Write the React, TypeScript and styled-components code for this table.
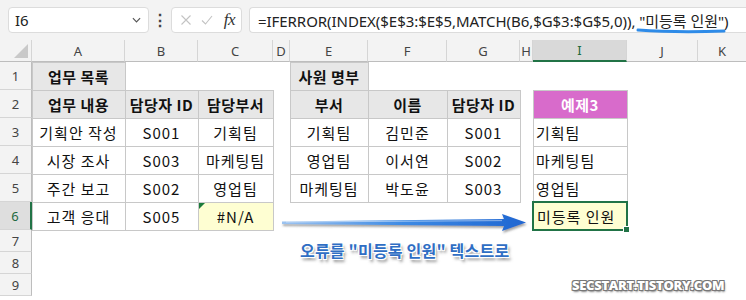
import styled, { createGlobalStyle } from "styled-components"

type Kind = "title" | "head" | "data" | "ex" | "list" | "na" | "sel"
type Spec = { t?: string; k?: Kind } | null

const COLS = ["A", "B", "C", "D", "E", "F", "G", "H", "I", "J", "K"]
const WIDTHS = [32, 93, 73, 75, 17, 78, 79, 73, 13, 94, 71]

const d = (t: string): Spec => ({ t, k: "data" })
const h = (t: string): Spec => ({ t, k: "head" })
const l = (t: string): Spec => ({ t, k: "list" })
const _ = null

const ROWS: Spec[][] = [
  [{ t: "업무 목록", k: "title" }, _, _, _, { t: "사원 명부", k: "title" }, _, _, _, _, _, _],
  [h("업무 내용"), h("담당자 ID"), h("담당부서"), _, h("부서"), h("이름"), h("담당자 ID"), _, { t: "예제3", k: "ex" }, _, _],
  [d("기획안 작성"), d("S001"), d("기획팀"), _, d("기획팀"), d("김민준"), d("S001"), _, l("기획팀"), _, _],
  [d("시장 조사"), d("S003"), d("마케팅팀"), _, d("영업팀"), d("이서연"), d("S002"), _, l("마케팅팀"), _, _],
  [d("주간 보고"), d("S002"), d("영업팀"), _, d("마케팅팀"), d("박도윤"), d("S003"), _, l("영업팀"), _, _],
  [d("고객 응대"), d("S005"), { t: "#N/A", k: "na" }, _, _, _, _, _, { t: "미등록 인원", k: "sel" }, _, _],
  [], [], [],
]

const GlobalStyle = createGlobalStyle`
  body {
    margin: 0;
    background: #ffffff;
    overflow: hidden;
    font-family: "Noto Sans", "Noto Sans CJK KR", sans-serif;
  }
`

const App = () => {
  return (
    <>
      <GlobalStyle />
      <Frame>
        <Toolbar>
          <NameBox>
            <span>I6</span>
            <Chevron viewBox="0 0 10 6">
              <path d="M1 1l4 4 4-4" />
            </Chevron>
          </NameBox>
          <Dots>⋮</Dots>
          <FxBox>
            <FxIcon viewBox="0 0 12 12">
              <path d="M1.5 1.5l9 9M10.5 1.5l-9 9" />
            </FxIcon>
            <FxIcon viewBox="0 0 12 12">
              <path d="M1 6.5l3.5 3.5L11 2" />
            </FxIcon>
            <Fx>fx</Fx>
          </FxBox>
          <FormulaInput>
            =IFERROR(INDEX($E$3:$E$5,MATCH(B6,$G$3:$G$5,0)), "미등록 인원")
          </FormulaInput>
        </Toolbar>

        <Sheet>
          <Corner>
            <svg width="14" height="14" viewBox="0 0 14 14">
              <path d="M14 0V14H0Z" fill="#c9c9c9" />
            </svg>
          </Corner>
          {COLS.map((c, i) => (
            <ColHead key={c} $sel={c === "I"} $last={i === COLS.length - 1}>
              {c}
            </ColHead>
          ))}

          {ROWS.map((row, r) => (
            <Row key={r} row={row} n={r + 1} />
          ))}
        </Sheet>

        <Underline width="90" height="8" viewBox="0 0 90 8">
          <path d="M2 3 C 30 5, 60 5, 88 4" />
        </Underline>

        <Arrow width="252" height="26" viewBox="0 0 252 26">
          <defs>
            <linearGradient id="shaft" x1="0" y1="0" x2="1" y2="0">
              <stop offset="0" stopColor="#9cc3f0" />
              <stop offset="0.5" stopColor="#3d8ae4" />
              <stop offset="1" stopColor="#1f66d1" />
            </linearGradient>
            <filter id="drop" x="-5%" y="-50%" width="110%" height="200%">
              <feDropShadow dx="1" dy="2" stdDeviation="1.2" floodColor="#555" floodOpacity="0.55" />
            </filter>
          </defs>
          <path
            d="M2 9.5 L224 7 L222 2 L246 10.5 L222 19 L224 14 L2 12 Z"
            fill="url(#shaft)"
            filter="url(#drop)"
          />
          <path d="M6 10 L222 8.6" stroke="#ffffff" strokeOpacity="0.6" strokeWidth="0.8" />
        </Arrow>

        <Caption>오류를 "미등록 인원" 텍스트로</Caption>
        <Watermark>SECSTART.TISTORY.COM</Watermark>
      </Frame>
    </>
  )
}

const Row = ({ row, n }: { row: Spec[]; n: number }) => {
  return (
    <>
      <RowHead $sel={n === 6}>{n}</RowHead>
      {COLS.map((c, i) => {
        const s = row[i]
        return (
          <Cell key={c} $kind={s?.k}>
            {s?.k === "na" && <ErrorMark />}
            {s?.t}
            {s?.k === "sel" && <Handle />}
          </Cell>
        )
      })}
    </>
  )
}

export default App

const Frame = styled.div`
  position: relative;
  width: 746px;
  height: 300px;
  overflow: hidden;
  background: #ffffff;
`

const Toolbar = styled.div`
  height: 40px;
  box-sizing: border-box;
  padding: 7px 0 7px 8px;
  background: #f3f3f3;
  display: flex;
  align-items: stretch;
`

const NameBox = styled.div`
  width: 141px;
  box-sizing: border-box;
  background: #ffffff;
  border: 1px solid #dcdcdc;
  border-radius: 4px;
  display: flex;
  align-items: center;
  justify-content: space-between;
  padding: 0 7px 0 6px;
  font-size: 15px;
  color: #222;
`

const Chevron = styled.svg`
  width: 9px;
  height: 6px;
  fill: none;
  stroke: #555;
  stroke-width: 1.3;
`

const Dots = styled.div`
  width: 22px;
  display: flex;
  align-items: center;
  justify-content: center;
  font-size: 16px;
  font-weight: 700;
  color: #444;
`

const FxBox = styled.div`
  width: 71px;
  box-sizing: border-box;
  background: #ffffff;
  border: 1px solid #dcdcdc;
  border-radius: 4px;
  display: flex;
  align-items: center;
  gap: 9px;
  padding: 0 6px 0 8px;
  margin-right: 7px;
`

const FxIcon = styled.svg`
  width: 12px;
  height: 12px;
  fill: none;
  stroke: #c3c3c3;
  stroke-width: 1.1;
`

const Fx = styled.span`
  font-family: "Liberation Serif", serif;
  font-style: italic;
  font-size: 17px;
  color: #333;
  margin-left: auto;
  letter-spacing: -0.5px;
`

const FormulaInput = styled.div`
  flex: 1;
  background: #ffffff;
  border: 1px solid #dcdcdc;
  border-right: none;
  border-radius: 4px 0 0 4px;
  display: flex;
  align-items: center;
  padding-left: 8px;
  font-size: 15px;
  color: #222;
  white-space: nowrap;
  overflow: hidden;
  letter-spacing: -0.05px;
`

const Sheet = styled.div`
  display: grid;
  grid-template-columns: ${WIDTHS.map((w) => w + "px").join(" ")} 1fr;
  grid-template-rows: 22px repeat(6, 28px) repeat(3, 22px);
`

const Corner = styled.div`
  background: #f3f3f3;
  border-right: 1px solid #d5d5d5;
  border-bottom: 1px solid #bdbdbd;
  display: flex;
  align-items: flex-end;
  justify-content: flex-end;
  padding: 0 3px 3px 0;
`

const ColHead = styled.div<{ $sel?: boolean; $last?: boolean }>`
  background: ${(p) => (p.$sel ? "#d9d9d9" : "#f3f3f3")};
  border-right: ${(p) => (p.$last ? "none" : "1px solid #d5d5d5")};
  border-bottom: ${(p) => (p.$sel ? "2px solid #217346" : "1px solid #bdbdbd")};
  display: flex;
  align-items: center;
  justify-content: center;
  font-size: 13px;
  color: ${(p) => (p.$sel ? "#1d6a40" : "#444")};
`

const RowHead = styled.div<{ $sel?: boolean }>`
  background: ${(p) => (p.$sel ? "#dedede" : "#f3f3f3")};
  border-bottom: 1px solid #d5d5d5;
  border-right: ${(p) => (p.$sel ? "2px solid #217346" : "1px solid #bdbdbd")};
  display: flex;
  align-items: center;
  justify-content: center;
  font-size: 13px;
  color: ${(p) => (p.$sel ? "#1d6a40" : "#444")};
`

const LINE = "#c8c8c8"
const GRID = `inset 1px 1px 0 ${LINE}, 1px 1px 0 ${LINE}, 1px 0 0 ${LINE}, 0 1px 0 ${LINE}`

const BG: Record<Kind, string> = {
  title: "#e7e7e7",
  head: "#e7e7e7",
  data: "#ffffff",
  ex: "#d86bcb",
  list: "#ffffff",
  na: "#fefed2",
  sel: "#fefed2",
}

const isBold = (k?: Kind) => k === "title" || k === "head" || k === "ex"

const Cell = styled.div<{ $kind?: Kind }>`
  position: relative;
  z-index: ${(p) => (p.$kind === "sel" ? 2 : p.$kind ? 1 : 0)};
  display: flex;
  align-items: center;
  justify-content: ${(p) => (p.$kind === "list" || p.$kind === "sel" ? "flex-start" : "center")};
  padding: 0 ${(p) => (p.$kind === "sel" ? 4 : 3)}px;
  font-family: "Noto Sans CJK KR", sans-serif;
  font-size: 15px;
  letter-spacing: ${(p) => (isBold(p.$kind) ? 0.5 : 1)}px;
  font-weight: ${(p) => (isBold(p.$kind) ? 700 : 400)};
  color: ${(p) => (p.$kind === "ex" ? "#ffffff" : "#111")};
  white-space: nowrap;
  background: ${(p) => (p.$kind ? BG[p.$kind] : "transparent")};
  box-shadow: ${(p) =>
    p.$kind === "sel"
      ? "0 0 0 1px #217346, inset 0 0 0 1px #217346"
      : p.$kind
        ? GRID
        : "none"};
`

const ErrorMark = styled.span`
  position: absolute;
  left: 1px;
  top: 1px;
  width: 0;
  height: 0;
  border-top: 6px solid #1a7a3a;
  border-right: 6px solid transparent;
`

const Handle = styled.span`
  position: absolute;
  right: -3px;
  bottom: -3px;
  width: 5px;
  height: 5px;
  background: #217346;
  border: 1px solid #ffffff;
`

const Underline = styled.svg`
  position: absolute;
  left: 636px;
  top: 27px;
  fill: none;
  stroke: #2e8be8;
  stroke-width: 3;
  stroke-linecap: round;
`

const Arrow = styled.svg`
  position: absolute;
  left: 280px;
  top: 212px;
`

const Caption = styled.div`
  position: absolute;
  left: 300px;
  top: 238px;
  font-family: "Noto Sans CJK KR", sans-serif;
  font-size: 16px;
  font-weight: 700;
  color: #2f6ec4;
  letter-spacing: 0.2px;
  text-shadow:
    -1px -1px 0 #fff,
    1px -1px 0 #fff,
    -1px 1px 0 #fff,
    1px 1px 0 #fff,
    2px 3px 3px rgba(60, 60, 60, 0.6);
`

const Watermark = styled.div`
  position: absolute;
  left: 572px;
  top: 276px;
  font-family: "Open Sans", sans-serif;
  font-size: 13px;
  font-weight: 800;
  color: #ffffff;
  letter-spacing: -0.3px;
  text-shadow:
    -1px -1px 0 #777,
    1px -1px 0 #777,
    -1px 1px 0 #777,
    1px 1px 0 #777,
    1px 2px 2px rgba(0, 0, 0, 0.5);
`
